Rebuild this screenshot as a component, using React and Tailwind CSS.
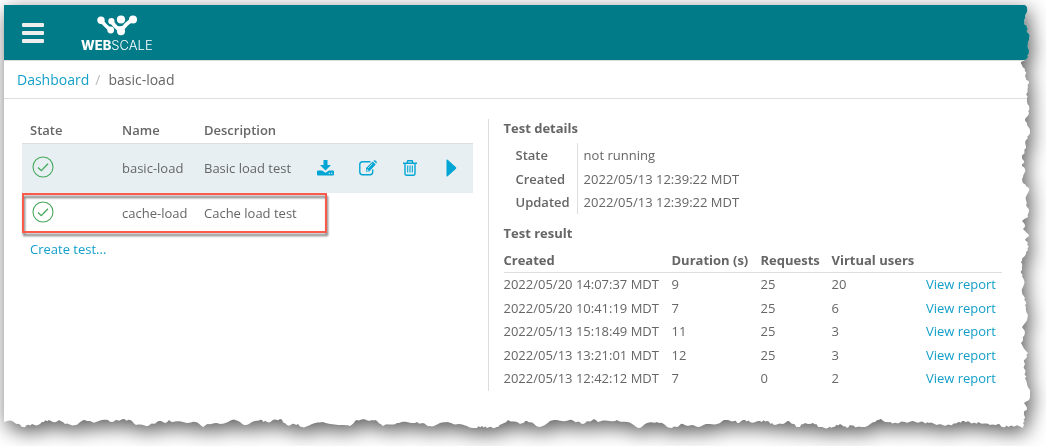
import { clsx } from "clsx";

const tests = [
  { name: "basic-load", description: "Basic load test", selected: true },
  { name: "cache-load", description: "Cache load test", highlighted: true },
];

const details = [
  { label: "State", value: "not running" },
  { label: "Created", value: "2022/05/13 12:39:22 MDT" },
  { label: "Updated", value: "2022/05/13 12:39:22 MDT" },
];

const results = [
  { created: "2022/05/20 14:07:37 MDT", duration: 9, requests: 25, users: 20 },
  { created: "2022/05/20 10:41:19 MDT", duration: 7, requests: 25, users: 6 },
  { created: "2022/05/13 15:18:49 MDT", duration: 11, requests: 25, users: 3 },
  { created: "2022/05/13 13:21:01 MDT", duration: 12, requests: 25, users: 3 },
  { created: "2022/05/13 12:42:12 MDT", duration: 7, requests: 0, users: 2 },
];

// [distance along the edge, depth of the tear], in px
const rightTear = [
  [0, 5], [2, 3], [7, 3], [11, 5], [15, 6], [19, 6], [21, 3], [24, 2], [27, 3], [29, 1],
  [33, 1], [37, 2], [45, 1], [52, 2], [55, 5], [57, 9], [60, 8], [64, 5], [73, 4], [78, 1],
  [82, 2], [88, 3], [95, 3], [101, 1], [108, 1], [114, 5], [118, 3], [126, 0], [130, 1], [135, 4],
  [143, 4], [152, 8], [156, 6], [161, 8], [164, 5], [172, 7], [178, 7], [183, 1], [195, 4], [202, 3],
  [206, 1], [212, 2], [216, 8], [220, 5], [224, 7], [228, 3], [230, 1], [235, 5], [238, 2], [245, 2],
  [248, 4], [257, 9], [265, 8], [268, 9], [275, 6], [287, 8], [293, 5], [302, 4], [310, 2], [318, 5],
  [322, 8], [327, 5], [334, 7], [338, 9], [348, 2], [357, 6], [368, 5], [375, 4], [385, 0], [395, 1],
  [398, 6], [403, 3], [408, 6], [413, 5], [418, 7], [420, 6], [422, 7],
];

const bottomTear = [
  [0, 7], [8, 8], [14, 5], [19, 2], [28, 5], [34, 4], [38, 7], [45, 9], [49, 7], [55, 9],
  [61, 5], [71, 4], [81, 9], [88, 7], [104, 9], [108, 7], [119, 10], [128, 8], [132, 4], [144, 3],
  [155, 8], [161, 6], [165, 9], [169, 7], [191, 7], [199, 2], [204, 5], [216, 5], [228, 9], [236, 7],
  [242, 4], [256, 9], [263, 7], [276, 10], [283, 4], [294, 5], [298, 2], [319, 7], [346, 3], [353, 9],
  [368, 9], [373, 8], [379, 3], [393, 6], [413, 7], [426, 3], [444, 7], [449, 5], [463, 3], [471, 1],
  [478, 3], [483, 1], [494, 2], [504, 9], [516, 5], [523, 8], [536, 2], [546, 8], [568, 9], [579, 5],
  [590, 10], [594, 7], [613, 9], [623, 7], [635, 1], [641, 5], [653, 7], [668, 1], [679, 5], [694, 2],
  [706, 5], [716, 6], [722, 9], [730, 8], [735, 6], [741, 9], [746, 7], [756, 8], [763, 8], [770, 4], [778, 5], [785, 8], [789, 5],
  [794, 2], [801, 6], [809, 6], [816, 2], [824, 1], [829, 2], [836, 5], [843, 1], [846, 4], [853, 2],
  [859, 2], [871, 7], [877, 10], [883, 7], [890, 6], [901, 7], [916, 7], [925, 6], [933, 4], [946, 4],
  [953, 6], [960, 8], [969, 6], [976, 6], [986, 4], [994, 5], [999, 2], [1006, 3], [1015, 3], [1019, 1],
];

// adds small notches between the points so the paper looks frayed
const fray = (points) =>
  points.flatMap(([at, depth], i) => {
    const next = points[i + 1];
    if (!next) return [[at, depth]];
    const steps = Math.max(1, Math.round((next[0] - at) / 2));
    return Array.from({ length: steps }, (_, step) => {
      const x = at + ((next[0] - at) * step) / steps;
      const y = depth + ((next[1] - depth) * step) / steps;
      return [x, step === 0 ? y : Math.max(0, y + Math.sin(x * 12.9) * 0.9)];
    });
  });

const tornEdge = () => {
  const right = fray(rightTear).map(([at, depth]) => `calc(100% - ${depth}px) ${(at / 424) * 100}%`);
  const bottom = fray(bottomTear).map(([at, depth]) => `${(at / 1026) * 100}% calc(100% - ${depth}px)`);
  return `polygon(0 0, ${right.join(", ")}, ${bottom.reverse().join(", ")})`;
};

const Logo = () => {
  return (
    <a href="#home" className="flex flex-col items-center text-white">
      <svg width="42" height="22" viewBox="0 0 42 22" fill="currentColor" stroke="currentColor" aria-hidden="true">
        <g stroke="none">
          <circle cx="5" cy="5.200" r="3.700" />
          <circle cx="15.400" cy="6.200" r="3.100" />
          <circle cx="25" cy="4.500" r="4.100" />
          <circle cx="37" cy="4.500" r="4" />
          <circle cx="14.700" cy="15" r="3.400" />
          <circle cx="25" cy="16.200" r="4" />
        </g>
        <path d="M5 5.200Q8 9.500 14.700 15" fill="none" strokeWidth="3.600" />
        <path d="M15.400 6.200Q18 11 25 16.200Q29 9 37 4.500" fill="none" strokeWidth="3.800" />
        <path d="M20 11Q25 12 30 10L27 17H23Z" stroke="none" />
      </svg>
      <span className="mt-[2px] font-[Inter,sans-serif] text-[13px] leading-3">
        <span className="font-extrabold">WEB</span>
        <span className="font-light">SCALE</span>
      </span>
    </a>
  );
};

const CheckIcon = () => {
  return (
    <svg width="22" height="22" viewBox="0 0 22 22" fill="none" stroke="#45a85a" role="img" aria-label="passed">
      <circle cx="11" cy="11" r="10" strokeWidth="1.1" />
      <path d="M6 11.500L9.300 14.700L16 7.700" strokeWidth="1.3" />
    </svg>
  );
};

const DownloadIcon = () => {
  return (
    <svg width="17" height="16" viewBox="0 0 17 16" fill="currentColor" aria-hidden="true">
      <path d="M6.500 0H10.500V5H14L8.500 10.500L3 5H6.500Z" />
      <path
        fillRule="evenodd"
        d="M1 10.500H5L8.500 12.800L12 10.500H16Q17 10.500 17 11.500V14.500Q17 15.500 16 15.500H1Q0 15.500 0 14.500V11.500Q0 10.500 1 10.500ZM11.800 12.800V13.900H12.900V12.800ZM14.300 12.800V13.900H15.400V12.800Z"
      />
    </svg>
  );
};

const EditIcon = () => {
  return (
    <svg width="18" height="16" viewBox="0 0 18 16" fill="none" stroke="currentColor" aria-hidden="true">
      <path d="M11.500 1.800H3.500Q.800 1.800.800 4.500V12Q.800 14.700 3.500 14.700H11Q13.700 14.700 13.700 12V9.500" strokeWidth="1.4" />
      <path d="M7 11.500V8L13.800 1.500L16.700 4.400L10.200 11.500Z" fill="currentColor" stroke="none" />
      <path d="M14.500.800L15.300.200Q16 0 16.500.500L17.700 1.700Q18.100 2.300 17.600 3L17.200 3.600Z" fill="currentColor" stroke="none" />
      <path d="M9 8.200L13.500 3.700M8.100 9V10.500H9.500" stroke="#e7eff3" strokeWidth=".8" />
    </svg>
  );
};

const TrashIcon = () => {
  return (
    <svg width="14" height="16" viewBox="0 0 14 16" fill="none" stroke="currentColor" aria-hidden="true">
      <path d="M0 3.300H14M4.500 3V1.300Q4.500.700 5.200.700H8.800Q9.500.700 9.500 1.300V3M2 3.500V13.800Q2 15.200 3.300 15.200H10.700Q12 15.200 12 13.800V3.500" strokeWidth="1.4" />
      <path d="M4.700 5.500V12.500M7 5.500V12.500M9.300 5.500V12.500" strokeWidth="1.1" />
    </svg>
  );
};

const PlayIcon = () => {
  return (
    <svg width="11" height="18" viewBox="0 0 11 18" fill="currentColor" aria-hidden="true">
      <path d="M.500 1.500Q.500 0 1.700.800L10 8.200Q10.800 9 10 9.800L1.700 17.200Q.500 18 .500 16.500Z" />
    </svg>
  );
};

const actions = [
  { label: "Download", Icon: DownloadIcon },
  { label: "Edit", Icon: EditIcon },
  { label: "Delete", Icon: TrashIcon },
  { label: "Run", Icon: PlayIcon },
];

const TopBar = () => {
  return (
    <header className="flex h-[55px] items-center gap-[37px] bg-[#007b87] pl-[18px]">
      <button type="button" aria-label="Menu" className="flex w-[22px] flex-col gap-1">
        <span className="h-[4px] rounded-[1px] bg-[#eeeeee]" />
        <span className="h-[4px] rounded-[1px] bg-[#eeeeee]" />
        <span className="h-[4px] rounded-[1px] bg-[#eeeeee]" />
      </button>
      <Logo />
    </header>
  );
};

const TestList = () => {
  return (
    <section className="pr-[15px]">
      <table className="w-full border-collapse text-left">
        <thead>
          <tr className="h-6 border-b border-[#dddddd]">
            <th className="w-[100px] pb-[2px] pl-2 font-semibold">State</th>
            <th className="w-[82px] pb-[2px] font-semibold">Name</th>
            <th className="pb-[2px] font-semibold">Description</th>
            <td />
          </tr>
        </thead>
        <tbody>
          {tests.map((test) => (
            <tr
              key={test.name}
              className={clsx("relative", test.selected ? "h-[50px] bg-[#e7eff3]" : "h-10")}
            >
              <td className="pb-[3px] pl-[10px]">
                <CheckIcon />
                {test.highlighted && (
                  <span className="pointer-events-none absolute inset-y-0 left-0 w-[305px] border-2 border-[#fb5a4b] drop-shadow-[1px_3px_1px_rgba(0,0,0,0.55)]" />
                )}
              </td>
              <td className="pb-px">{test.name}</td>
              <td className="pb-px whitespace-nowrap">{test.description}</td>
              <td className="w-[168px]">
                {test.selected && (
                  <div className="flex text-[#00a5d3]">
                    {actions.map(({ label, Icon }) => (
                      <button key={label} type="button" aria-label={label} className="flex w-[42px] items-center justify-center">
                        <Icon />
                      </button>
                    ))}
                  </div>
                )}
              </td>
            </tr>
          ))}
        </tbody>
      </table>
      <a href="#create" className="mt-[7px] ml-2 inline-block text-[#129fc9]">
        Create test...
      </a>
    </section>
  );
};

const TestDetails = () => {
  return (
    <section className="border-l border-[#dddddd] pb-px pl-[15px]">
      <h2 className="font-bold">Test details</h2>
      <table className="mt-[6px] ml-3 border-collapse text-left">
        <tbody>
          {details.map((item) => (
            <tr key={item.label} className="odd:h-6 even:h-[23px]">
              <th className="border-r border-[#dddddd] pr-[7px] font-semibold">{item.label}</th>
              <td className="pl-[6px]">{item.value}</td>
            </tr>
          ))}
        </tbody>
      </table>
      <h2 className="mt-[10px] font-bold">Test result</h2>
      <table className="mt-[6px] w-full border-collapse text-left">
        <thead>
          <tr className="h-6 border-b border-[#dddddd]">
            <th className="w-[168px] font-bold">Created</th>
            <th className="w-[89px] font-bold">Duration (s)</th>
            <th className="w-[71px] font-bold">Requests</th>
            <th className="font-bold">Virtual users</th>
            <td />
          </tr>
        </thead>
        <tbody>
          {results.map((result) => (
            <tr key={result.created} className="odd:h-6 even:h-[23px]">
              <td>{result.created}</td>
              <td>{result.duration}</td>
              <td>{result.requests}</td>
              <td>{result.users}</td>
              <td className="pr-[6px] text-right">
                <a href="#report" className="text-[#129fc9]">
                  View report
                </a>
              </td>
            </tr>
          ))}
        </tbody>
      </table>
    </section>
  );
};

const App = () => {
  return (
    <div className="flex min-h-screen bg-white pt-[5px] pr-4 pb-[17px] pl-1 font-['Open_Sans','Noto_Sans',sans-serif] text-[13px] leading-[18px] text-[#666666]">
      <div className="flex grow drop-shadow-[3px_6px_10px_rgba(0,0,0,0.65)]">
        <div className="grow bg-white" style={{ clipPath: tornEdge() }}>
          <TopBar />
          <nav aria-label="Breadcrumb" className="flex h-[39px] items-center border-y border-[#dddddd] pl-[13px] text-sm">
            <a href="#dashboard" className="text-[#129fc9]">Dashboard</a>
            <span className="pr-2 pl-[6px] text-[#bbbbbb]">/</span>
            <span>basic-load</span>
          </nav>
          <main className="grid grid-cols-[19fr_21fr] pt-5 pr-7 pb-[38px] pl-[18px]">
            <TestList />
            <TestDetails />
          </main>
        </div>
      </div>
    </div>
  );
};

export default App;
